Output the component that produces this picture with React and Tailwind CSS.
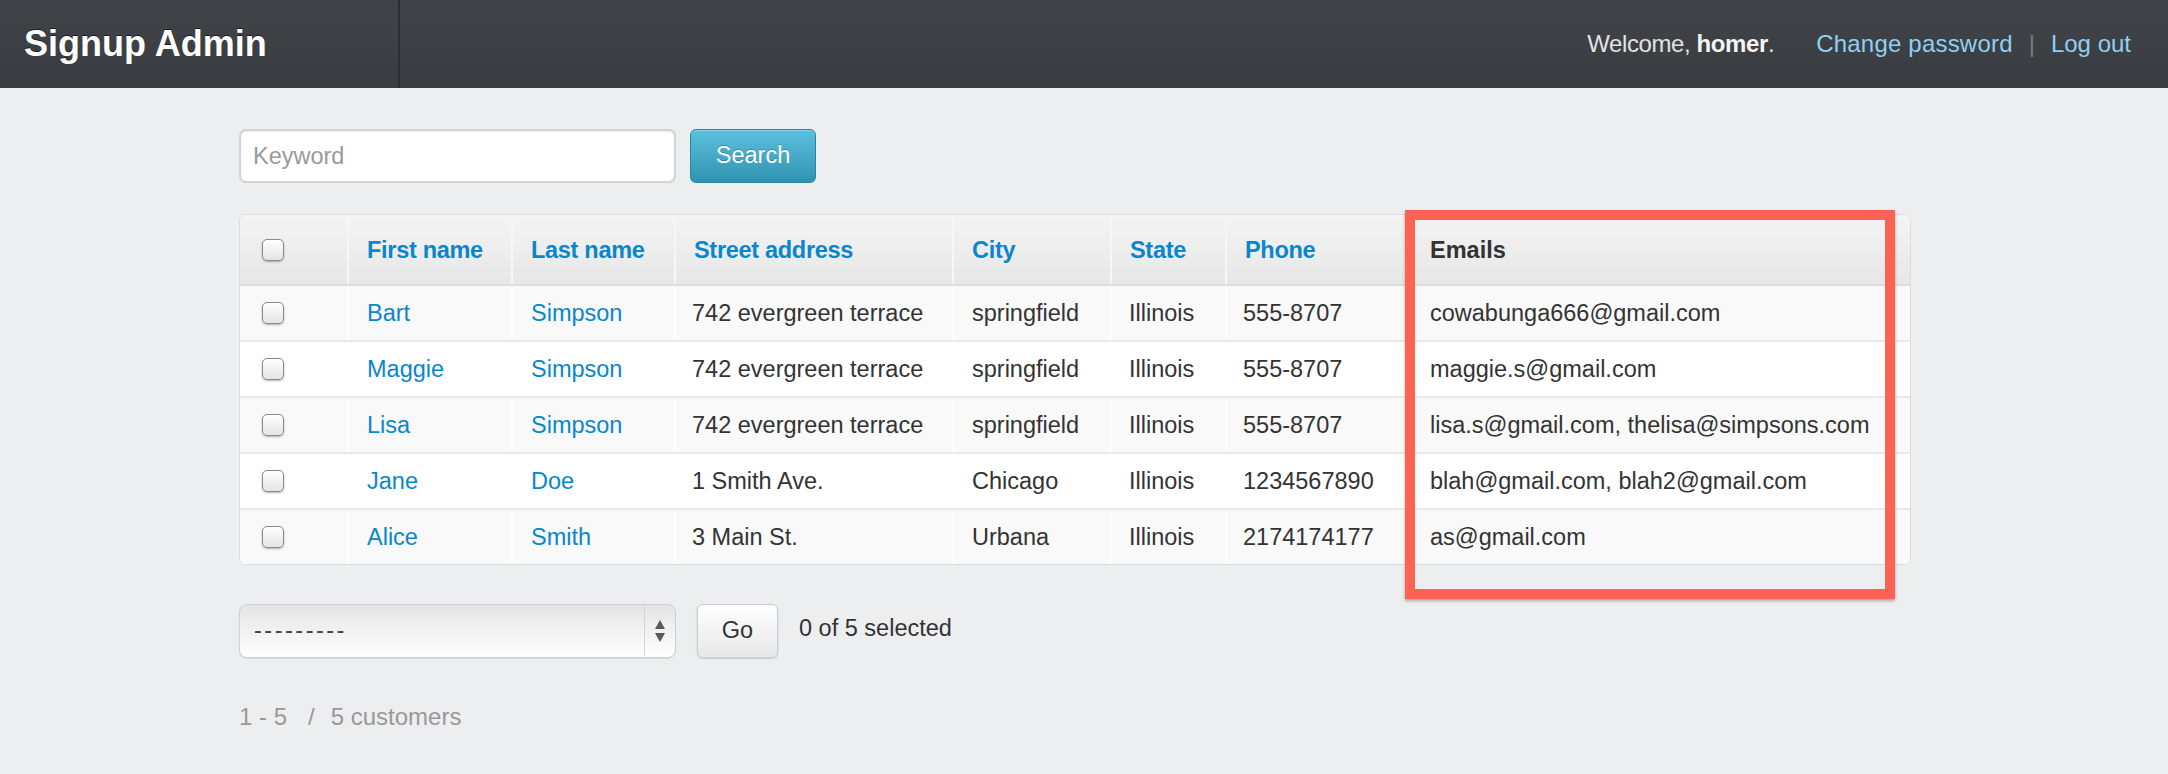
import { useState } from 'react';

const customers = [
  { first: 'Bart', last: 'Simpson', street: '742 evergreen terrace', city: 'springfield', state: 'Illinois', phone: '555-8707', emails: 'cowabunga666@gmail.com' },
  { first: 'Maggie', last: 'Simpson', street: '742 evergreen terrace', city: 'springfield', state: 'Illinois', phone: '555-8707', emails: 'maggie.s@gmail.com' },
  { first: 'Lisa', last: 'Simpson', street: '742 evergreen terrace', city: 'springfield', state: 'Illinois', phone: '555-8707', emails: 'lisa.s@gmail.com, thelisa@simpsons.com' },
  { first: 'Jane', last: 'Doe', street: '1 Smith Ave.', city: 'Chicago', state: 'Illinois', phone: '1234567890', emails: 'blah@gmail.com, blah2@gmail.com' },
  { first: 'Alice', last: 'Smith', street: '3 Main St.', city: 'Urbana', state: 'Illinois', phone: '2174174177', emails: 'as@gmail.com' },
];

const gridCols = 'grid grid-cols-[107px_164px_163px_278px_158px_115px_185px_1fr]';

const Checkbox = ({ checked, onChange }) => (
  <button
    onClick={onChange}
    className="w-[22px] h-[22px] rounded-[5px] border border-[#8a8a8a] bg-gradient-to-b from-white to-[#e4e4e4] shadow-[0_1px_2px_rgba(0,0,0,0.3)] flex items-center justify-center"
  >
    {checked && <span className="text-[14px] leading-none text-[#333]">✓</span>}
  </button>
);

const App = () => {
  const [selected, setSelected] = useState([]);

  const toggle = (i) =>
    setSelected((s) => (s.includes(i) ? s.filter((x) => x !== i) : [...s, i]));
  const toggleAll = () =>
    setSelected((s) => (s.length === customers.length ? [] : customers.map((_, i) => i)));

  return (
    <div className="relative min-h-screen h-[774px] bg-[#edeef0] font-['Liberation_Sans',Arial,sans-serif] text-[#333]">

      <header className="h-[88px] flex items-stretch bg-gradient-to-b from-[#404347] to-[#393c40]">
        <div className="w-[400px] shrink-0 flex items-center pl-[24px] border-r-2 border-[#2c2e31]">
          <h1 className="text-[36px] font-bold text-white [text-shadow:0_-1px_0_rgba(0,0,0,0.6)]">Signup Admin</h1>
        </div>
        <div className="flex-1 flex items-center justify-end pr-[37px] text-[24px]">
          <span className="text-[#e2e2e2] tracking-[-0.4px]">Welcome, <b className="text-[#f4f4f4]">homer</b>.</span>
          <a href="#" className="ml-[42px] text-[#8fd0f2] tracking-[0.2px]">Change password</a>
          <span className="mx-[16px] text-[#777b80]">|</span>
          <a href="#" className="text-[#8fd0f2]">Log out</a>
        </div>
      </header>

      <main className="pl-[239px] w-[1911px]">
        <div className="pt-[41px] flex items-center gap-[14px]">
          <input
            placeholder="Keyword"
            className="w-[437px] h-[54px] rounded-[7px] border-2 border-[#d3d3d3] bg-white px-[12px] text-[23.5px] text-[#333] placeholder:text-[#9a9a9a] shadow-[inset_0_1px_2px_rgba(0,0,0,0.08)] outline-none"
          />
          <button className="w-[126px] h-[54px] rounded-[6px] border border-[#2a86a3] bg-gradient-to-b from-[#5cc1de] to-[#2f93b2] text-white text-[23.5px] [text-shadow:0_-1px_0_rgba(0,0,0,0.25)] shadow-[inset_0_1px_0_rgba(255,255,255,0.25)]">
            Search
          </button>
        </div>

        <div className="mt-[31px] rounded-[7px] border border-[#dcdcdc] bg-white overflow-hidden text-[23.5px]">
          <div className={`${gridCols} h-[69px] pt-[2px] bg-gradient-to-b from-[#f4f4f4] to-[#e7e7e7] font-bold`}>
            <div className="flex items-center pl-[22px] -mt-[2px]">
              <Checkbox checked={selected.length === customers.length} onChange={toggleAll} />
            </div>
            {['First name', 'Last name', 'Street address', 'City', 'State', 'Phone'].map((h) => (
              <div key={h} className="flex items-center pl-[18px] border-l-2 border-[#f6f6f6]">
                <a href="#" className="text-[#0a86cc] tracking-[-0.3px]">{h}</a>
              </div>
            ))}
            <div className="flex items-center pl-[18px] border-l-2 border-[#f6f6f6] text-[#333]">Emails</div>
          </div>

          {customers.map((c, i) => (
            <div
              key={c.first}
              className={`${gridCols} h-[56px] pt-[2px] border-t-2 ${i === 0 ? 'border-[#dedede]' : 'border-[#e8e8e8]'} ${i % 2 === 0 ? 'bg-[#f9f9f9]' : 'bg-white'}`}
            >
              <div className="flex items-center pl-[22px] -mt-[2px]">
                <Checkbox checked={selected.includes(i)} onChange={() => toggle(i)} />
              </div>
              <div className="flex items-center pl-[18px] border-l-2 border-white"><a href="#" className="text-[#0a86cc]">{c.first}</a></div>
              <div className="flex items-center pl-[18px] border-l-2 border-white"><a href="#" className="text-[#0a86cc]">{c.last}</a></div>
              <div className="flex items-center pl-[16px] border-l-2 border-white">{c.street}</div>
              <div className="flex items-center pl-[18px] border-l-2 border-white">{c.city}</div>
              <div className="flex items-center pl-[17px] border-l-2 border-white">{c.state}</div>
              <div className="flex items-center pl-[16px] border-l-2 border-white">{c.phone}</div>
              <div className="flex items-center pl-[18px] border-l-2 border-white">{c.emails}</div>
            </div>
          ))}
        </div>

        <div className="mt-[39px] flex items-center text-[23.5px]">
          <div className="relative w-[437px] h-[54px] rounded-[8px] border border-[#cfcfcf] bg-gradient-to-b from-[#e4e4e4] to-white shadow-[0_1px_1px_rgba(0,0,0,0.08)] flex items-center">
            <span className="pl-[14px] text-[#444] flex-1 tracking-[2.5px]">---------</span>
            <div className="w-[31px] h-[50px] border-l border-[#d4d4d4] flex items-center justify-center">
              <svg width="12" height="26" viewBox="0 0 12 26">
                <path d="M6 2 L11 11 L1 11 Z" fill="#5a5a5a" />
                <path d="M6 24 L11 15 L1 15 Z" fill="#5a5a5a" />
              </svg>
            </div>
          </div>
          <button className="ml-[21px] w-[81px] h-[54px] rounded-[6px] border border-[#cccccc] bg-gradient-to-b from-white to-[#e8e8e8] shadow-[0_1px_2px_rgba(0,0,0,0.15)] text-[#333]">
            Go
          </button>
          <span className="ml-[21px] -mt-[5px]">{selected.length} of {customers.length} selected</span>
        </div>

        <p className="mt-[41px] flex text-[24px] text-[#999]">
          <span>1 - 5</span>
          <span className="ml-[21px]">/</span>
          <span className="ml-[16px]">5 customers</span>
        </p>
      </main>

      <div className="absolute left-[1405px] top-[210px] w-[490px] h-[389px] border-[10px] border-[#fc6352] shadow-[0_2px_3px_rgba(0,0,0,0.3)] pointer-events-none" />
    </div>
  );
};

export default App;
